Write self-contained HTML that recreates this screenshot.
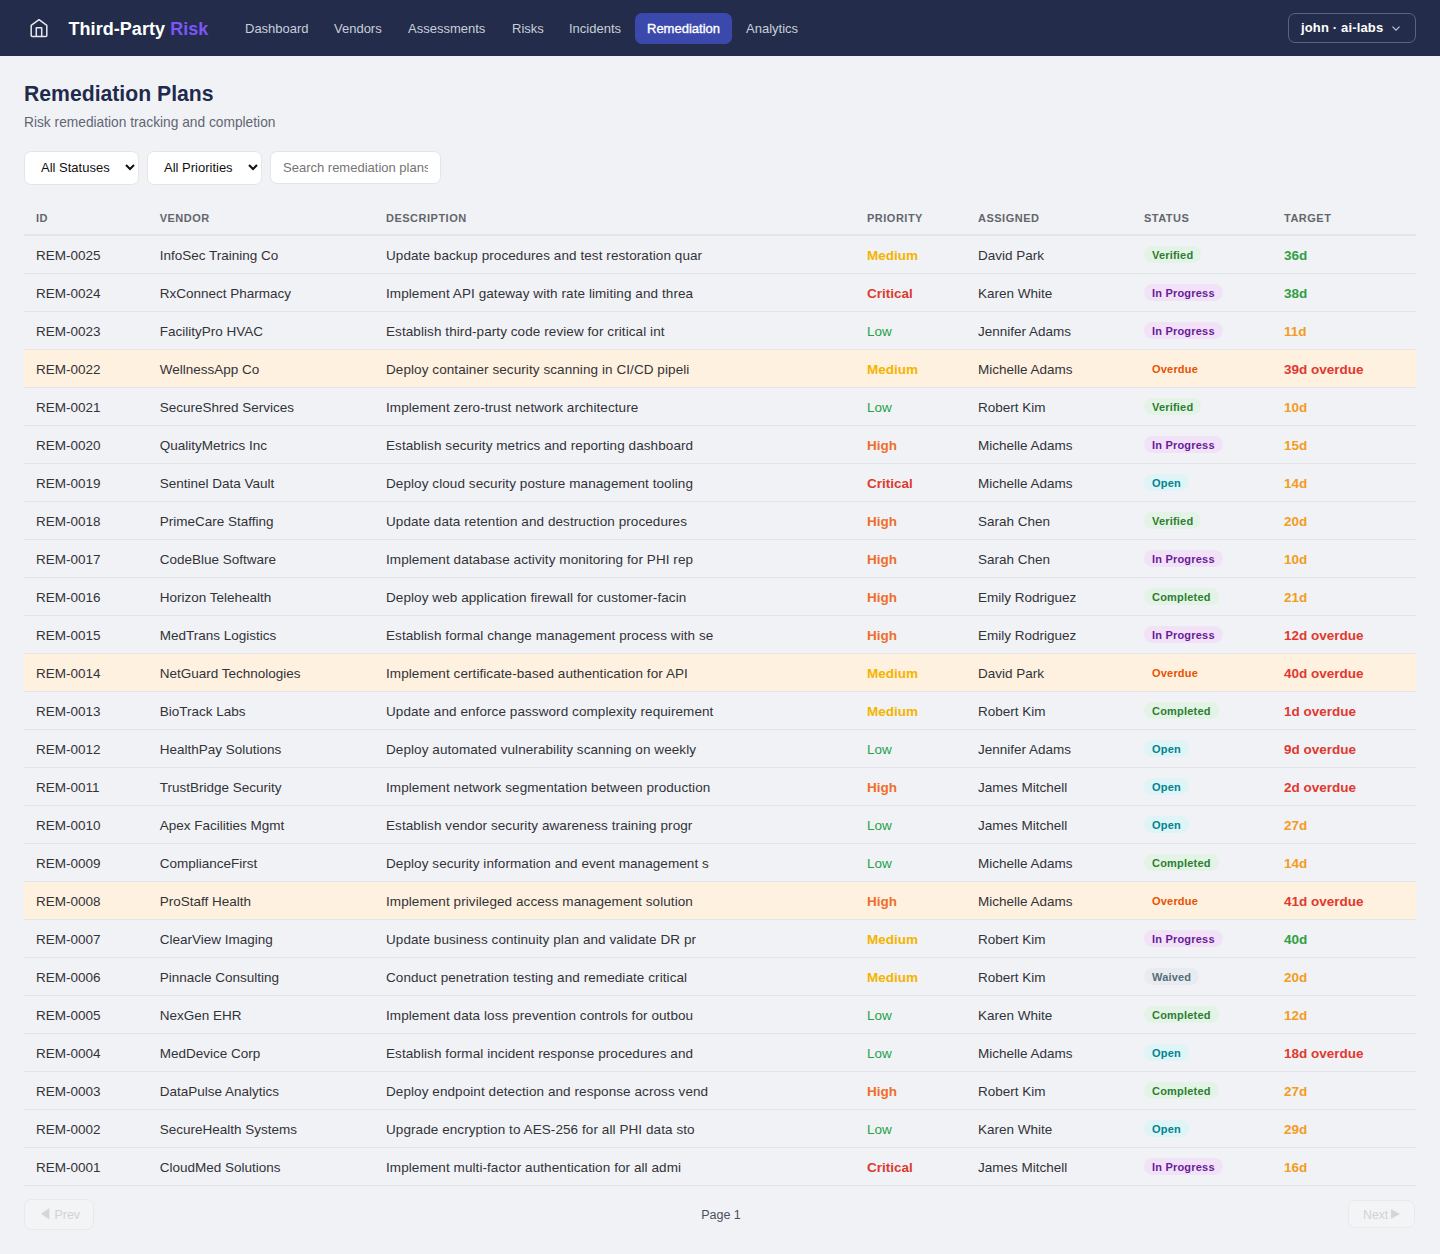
<!DOCTYPE html>
<html><head><meta charset="utf-8">
<style>
*{box-sizing:border-box;margin:0;padding:0}
html,body{width:1440px;height:1254px;overflow:hidden}
body{background:#f1f2f5;font-family:"Liberation Sans",sans-serif;color:#2f3542}
.top{position:absolute;left:0;top:0;width:1440px;height:56px;background:#232d4b}
.home{position:absolute;left:30px;top:19px;width:18px;height:19px}
.brand{position:absolute;left:68.5px;top:18px;letter-spacing:0.05px;font-size:18px;font-weight:bold;color:#fff;line-height:22px;white-space:nowrap}
.brand span{color:#7c55f6}
.nav{position:absolute;top:13px;height:31px;font-size:13px;color:#c9ceda;line-height:31px;white-space:nowrap}
.nav.act{background:#3b49ad;color:#fff;border-radius:7px;-webkit-text-stroke:0.35px #fff}
.user{position:absolute;left:1288px;top:13px;width:128px;height:30px;border:1px solid #5a6380;border-radius:7px;color:#fff;font-weight:bold;font-size:13px;line-height:28px;padding-left:12px;white-space:nowrap;letter-spacing:0.15px}
.user svg{position:absolute;left:103px;top:12px}
h1{position:absolute;left:24px;top:81px;font-size:21.2px;font-weight:bold;color:#1f2a4d;line-height:26px;white-space:nowrap}
.sub{position:absolute;left:24px;top:115px;font-size:13.75px;color:#5f6674;line-height:16px;white-space:nowrap}
.sel{position:absolute;top:150.5px;height:34px;background:#fff;border:1px solid #e3e5ea;border-radius:7px;font-size:13px;color:#111;line-height:32px;white-space:nowrap}
.sel svg{position:absolute;top:12.5px}
.search{position:absolute;left:270px;top:151px;width:171px;height:33px;background:#fff;border:1px solid #e3e5ea;border-radius:7px;font-size:13px;color:#757575;line-height:31px;padding-left:12px;white-space:nowrap;overflow:hidden}
table{position:absolute;left:24px;top:200px;width:1392px;border-collapse:collapse;table-layout:fixed}
th{height:35px;text-align:left;font-size:11px;font-weight:bold;letter-spacing:0.5px;color:#64666c;padding-left:12px;border-bottom:2px solid #e2e4e8;vertical-align:middle;padding-top:2px}
td{height:38px;font-size:13.5px;padding-left:12px;border-bottom:1px solid #e3e5e9;white-space:nowrap;overflow:hidden;color:#313338;vertical-align:middle;padding-top:2px}
tr.hl td{background:#fff1df}
td:nth-child(3){letter-spacing:0.08px}
.pm{color:#f4b400;font-weight:bold}
.pc{color:#dd3b2f;font-weight:bold}
.pl{color:#23a24c}
.ph{color:#ef6d2b;font-weight:bold}
.b{display:inline-block;font-size:11px;font-weight:bold;letter-spacing:0.2px;padding:0 8px;height:17px;line-height:19px;border-radius:9px;vertical-align:middle;position:relative;top:-1px}
.sv{background:#e3f4e6;color:#2e7d32}
.si{background:#f1e2f7;color:#6a1b9a}
.so{background:#fff1df;color:#e65100}
.sp{background:#dff4f7;color:#00838f}
.sc{background:#e3f4e6;color:#2e7d32}
.sw{background:#e8ebef;color:#546e7a}
.tg{color:#2ea043;font-weight:bold}
.to{color:#f39c1f;font-weight:bold}
.tr{color:#e0392f;font-weight:bold}
.pbtn{position:absolute;border:1px solid #e8e9ec;background:#f3f4f6;border-radius:7px;font-size:12.3px;color:#d0d2d6;white-space:nowrap}
.page{position:absolute;left:1px;width:1440px;text-align:center;top:1207px;font-size:12.5px;color:#4b5060;line-height:16px}
</style></head><body>
<div class="top">
  <svg class="home" viewBox="0 0 18 19" fill="none" stroke="#e6e8ee" stroke-width="1.5" stroke-linejoin="round"><path d="M1.2 6.3 L9 0.6 L16.8 6.3 V16.5 a1 1 0 0 1 -1 1 H2.2 a1 1 0 0 1 -1 -1 Z"/><path d="M6.3 17.5 V8.8 H11.7 V17.5"/></svg>
  <div class="brand">Third-Party <span>Risk</span></div>
  <div class="nav" style="left:245px">Dashboard</div>
  <div class="nav" style="left:334px">Vendors</div>
  <div class="nav" style="left:408px">Assessments</div>
  <div class="nav" style="left:512px">Risks</div>
  <div class="nav" style="left:569px">Incidents</div>
  <div class="nav act" style="left:635px;width:97px;text-align:center">Remediation</div>
  <div class="nav" style="left:746px">Analytics</div>
  <div class="user">john · ai-labs<svg width="8" height="5" viewBox="0 0 8 5" fill="none" stroke="#c9ceda" stroke-width="1.1"><path d="M0.5 0.6 L4 4.2 L7.5 0.6"/></svg></div>
</div>
<h1>Remediation Plans</h1>
<div class="sub">Risk remediation tracking and completion</div>
<div class="sel" style="left:24px;width:114.5px;padding-left:16px">All Statuses<svg style="left:100px" width="10" height="7" viewBox="0 0 10 7" fill="none" stroke="#111" stroke-width="2"><path d="M1 1 L5 5 L9 1"/></svg></div>
<div class="sel" style="left:147px;width:114.5px;padding-left:16px">All Priorities<svg style="left:100px" width="10" height="7" viewBox="0 0 10 7" fill="none" stroke="#111" stroke-width="2"><path d="M1 1 L5 5 L9 1"/></svg></div>
<div class="search"><span style="display:inline-block;width:145px;overflow:hidden;vertical-align:top">Search remediation plans</span></div>
<table>
<colgroup><col style="width:123.7px"><col style="width:226.3px"><col style="width:481px"><col style="width:111px"><col style="width:166px"><col style="width:140px"><col style="width:144px"></colgroup>
<thead><tr><th>ID</th><th>VENDOR</th><th>DESCRIPTION</th><th>PRIORITY</th><th>ASSIGNED</th><th>STATUS</th><th>TARGET</th></tr></thead>
<tbody>
<tr><td>REM-0025</td><td>InfoSec Training Co</td><td>Update backup procedures and test restoration quar</td><td class="pm">Medium</td><td>David Park</td><td><span class="b sv">Verified</span></td><td class="tg">36d</td></tr>
<tr><td>REM-0024</td><td>RxConnect Pharmacy</td><td>Implement API gateway with rate limiting and threa</td><td class="pc">Critical</td><td>Karen White</td><td><span class="b si">In Progress</span></td><td class="tg">38d</td></tr>
<tr><td>REM-0023</td><td>FacilityPro HVAC</td><td>Establish third-party code review for critical int</td><td class="pl">Low</td><td>Jennifer Adams</td><td><span class="b si">In Progress</span></td><td class="to">11d</td></tr>
<tr class="hl"><td>REM-0022</td><td>WellnessApp Co</td><td>Deploy container security scanning in CI/CD pipeli</td><td class="pm">Medium</td><td>Michelle Adams</td><td><span class="b so">Overdue</span></td><td class="tr">39d overdue</td></tr>
<tr><td>REM-0021</td><td>SecureShred Services</td><td>Implement zero-trust network architecture</td><td class="pl">Low</td><td>Robert Kim</td><td><span class="b sv">Verified</span></td><td class="to">10d</td></tr>
<tr><td>REM-0020</td><td>QualityMetrics Inc</td><td>Establish security metrics and reporting dashboard</td><td class="ph">High</td><td>Michelle Adams</td><td><span class="b si">In Progress</span></td><td class="to">15d</td></tr>
<tr><td>REM-0019</td><td>Sentinel Data Vault</td><td>Deploy cloud security posture management tooling</td><td class="pc">Critical</td><td>Michelle Adams</td><td><span class="b sp">Open</span></td><td class="to">14d</td></tr>
<tr><td>REM-0018</td><td>PrimeCare Staffing</td><td>Update data retention and destruction procedures</td><td class="ph">High</td><td>Sarah Chen</td><td><span class="b sv">Verified</span></td><td class="to">20d</td></tr>
<tr><td>REM-0017</td><td>CodeBlue Software</td><td>Implement database activity monitoring for PHI rep</td><td class="ph">High</td><td>Sarah Chen</td><td><span class="b si">In Progress</span></td><td class="to">10d</td></tr>
<tr><td>REM-0016</td><td>Horizon Telehealth</td><td>Deploy web application firewall for customer-facin</td><td class="ph">High</td><td>Emily Rodriguez</td><td><span class="b sc">Completed</span></td><td class="to">21d</td></tr>
<tr><td>REM-0015</td><td>MedTrans Logistics</td><td>Establish formal change management process with se</td><td class="ph">High</td><td>Emily Rodriguez</td><td><span class="b si">In Progress</span></td><td class="tr">12d overdue</td></tr>
<tr class="hl"><td>REM-0014</td><td>NetGuard Technologies</td><td>Implement certificate-based authentication for API</td><td class="pm">Medium</td><td>David Park</td><td><span class="b so">Overdue</span></td><td class="tr">40d overdue</td></tr>
<tr><td>REM-0013</td><td>BioTrack Labs</td><td>Update and enforce password complexity requirement</td><td class="pm">Medium</td><td>Robert Kim</td><td><span class="b sc">Completed</span></td><td class="tr">1d overdue</td></tr>
<tr><td>REM-0012</td><td>HealthPay Solutions</td><td>Deploy automated vulnerability scanning on weekly</td><td class="pl">Low</td><td>Jennifer Adams</td><td><span class="b sp">Open</span></td><td class="tr">9d overdue</td></tr>
<tr><td>REM-0011</td><td>TrustBridge Security</td><td>Implement network segmentation between production</td><td class="ph">High</td><td>James Mitchell</td><td><span class="b sp">Open</span></td><td class="tr">2d overdue</td></tr>
<tr><td>REM-0010</td><td>Apex Facilities Mgmt</td><td>Establish vendor security awareness training progr</td><td class="pl">Low</td><td>James Mitchell</td><td><span class="b sp">Open</span></td><td class="to">27d</td></tr>
<tr><td>REM-0009</td><td>ComplianceFirst</td><td>Deploy security information and event management s</td><td class="pl">Low</td><td>Michelle Adams</td><td><span class="b sc">Completed</span></td><td class="to">14d</td></tr>
<tr class="hl"><td>REM-0008</td><td>ProStaff Health</td><td>Implement privileged access management solution</td><td class="ph">High</td><td>Michelle Adams</td><td><span class="b so">Overdue</span></td><td class="tr">41d overdue</td></tr>
<tr><td>REM-0007</td><td>ClearView Imaging</td><td>Update business continuity plan and validate DR pr</td><td class="pm">Medium</td><td>Robert Kim</td><td><span class="b si">In Progress</span></td><td class="tg">40d</td></tr>
<tr><td>REM-0006</td><td>Pinnacle Consulting</td><td>Conduct penetration testing and remediate critical</td><td class="pm">Medium</td><td>Robert Kim</td><td><span class="b sw">Waived</span></td><td class="to">20d</td></tr>
<tr><td>REM-0005</td><td>NexGen EHR</td><td>Implement data loss prevention controls for outbou</td><td class="pl">Low</td><td>Karen White</td><td><span class="b sc">Completed</span></td><td class="to">12d</td></tr>
<tr><td>REM-0004</td><td>MedDevice Corp</td><td>Establish formal incident response procedures and</td><td class="pl">Low</td><td>Michelle Adams</td><td><span class="b sp">Open</span></td><td class="tr">18d overdue</td></tr>
<tr><td>REM-0003</td><td>DataPulse Analytics</td><td>Deploy endpoint detection and response across vend</td><td class="ph">High</td><td>Robert Kim</td><td><span class="b sc">Completed</span></td><td class="to">27d</td></tr>
<tr><td>REM-0002</td><td>SecureHealth Systems</td><td>Upgrade encryption to AES-256 for all PHI data sto</td><td class="pl">Low</td><td>Karen White</td><td><span class="b sp">Open</span></td><td class="to">29d</td></tr>
<tr><td>REM-0001</td><td>CloudMed Solutions</td><td>Implement multi-factor authentication for all admi</td><td class="pc">Critical</td><td>James Mitchell</td><td><span class="b si">In Progress</span></td><td class="to">16d</td></tr>
</tbody></table>
<div class="pbtn" style="left:24px;top:1199px;width:70px;height:31px"><svg width="9" height="12" viewBox="0 0 9 12" style="position:absolute;left:15.7px;top:8.3px"><path d="M8.3 0 V11.5 L0 5.75 Z" fill="#d4d6d9"/></svg><span style="position:absolute;left:29.6px;top:1px;line-height:28px">Prev</span></div>
<div class="page">Page 1</div>
<div class="pbtn" style="left:1348px;top:1200px;width:67px;height:28px"><span style="position:absolute;left:14px;top:0;line-height:28px">Next</span><svg width="9" height="11" viewBox="0 0 9 11" style="position:absolute;left:42px;top:8px"><path d="M0 0 V10 L9 5 Z" fill="#d4d6d9"/></svg></div>
</body></html>
